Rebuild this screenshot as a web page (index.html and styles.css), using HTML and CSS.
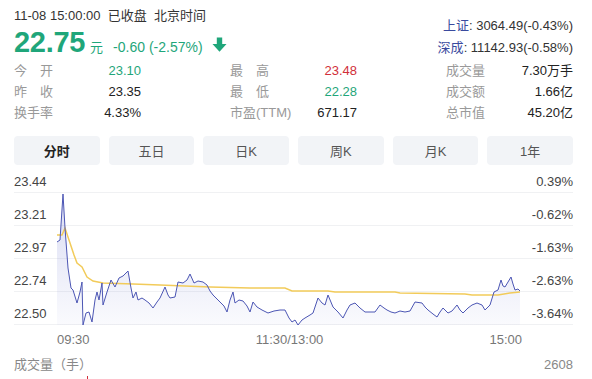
FILE: index.html
```html
<!DOCTYPE html>
<html lang="zh-CN">
<head>
    <meta charset="UTF-8">
    <meta name="viewport" content="width=device-width, initial-scale=1.0">
    <title>分时行情</title>
    <link rel="stylesheet" href="styles.css">
</head>
<body>
    <div class="page">
        <div class="top">
            <div class="quote-left">
                <div class="time">11-08 15:00:00&nbsp;&nbsp;已收盘&nbsp;&nbsp;北京时间</div>
                <div class="quote">
                    <span class="price">22.75</span>
                    <span class="unit">元</span>
                    <span class="change">-0.60 (-2.57%)</span>
                    <svg class="arrow" width="15" height="15" viewBox="0 0 15 15">
                        <path d="M4.8 0.5h5.4v6.6h4.3L7.5 14.7 0.5 7.1h4.3z" fill="#1fa67a"/>
                    </svg>
                </div>
            </div>
            <div class="indices">
                <div><span class="idx-name">上证</span>: 3064.49(-0.43%)</div>
                <div><span class="idx-name">深成</span>: 11142.93(-0.58%)</div>
            </div>
        </div>

        <div class="stats">
            <div class="stat"><span class="label">今开</span><span class="value down">23.10</span></div>
            <div class="stat"><span class="label">最高</span><span class="value up">23.48</span></div>
            <div class="stat"><span class="label">成交量</span><span class="value">7.30万手</span></div>
            <div class="stat"><span class="label">昨收</span><span class="value">23.35</span></div>
            <div class="stat"><span class="label">最低</span><span class="value down">22.28</span></div>
            <div class="stat"><span class="label">成交额</span><span class="value">1.66亿</span></div>
            <div class="stat"><span class="label">换手率</span><span class="value">4.33%</span></div>
            <div class="stat"><span class="label wide">市盈(TTM)</span><span class="value">671.17</span></div>
            <div class="stat"><span class="label">总市值</span><span class="value">45.20亿</span></div>
        </div>

        <div class="tabs">
            <button class="tab active">分时</button>
            <button class="tab">五日</button>
            <button class="tab">日K</button>
            <button class="tab">周K</button>
            <button class="tab">月K</button>
            <button class="tab">1年</button>
        </div>

        <div class="chart">
            <div class="row"><span>23.44</span><span>0.39%</span></div>
            <div class="row"><span>23.21</span><span>-0.62%</span></div>
            <div class="row"><span>22.97</span><span>-1.63%</span></div>
            <div class="row"><span>22.74</span><span>-2.63%</span></div>
            <div class="row"><span>22.50</span><span>-3.64%</span></div>

            <svg class="lines" viewBox="14 165 559 160" preserveAspectRatio="none">
                <defs>
                    <linearGradient id="fill" x1="0" y1="0" x2="0" y2="1">
                        <stop offset="0" stop-color="#5561c8" stop-opacity="0.22"/>
                        <stop offset="1" stop-color="#5561c8" stop-opacity="0.03"/>
                    </linearGradient>
                </defs>
                <path fill="url(#fill)" d="M57,325 L57,242 60,240 63,194 65,228 68,268 71,288 73,290 77,303 80,292 82,282 83,325 86,313 89,312 92,322 95,300 97,292 99,300 102,283 103,305 107,292 109,286 111,280 115,287 119,278 123,276 128,271 131,288 133,298 136,292 138,300 142,298 145,300 149,303 153,308 157,302 160,298 165,287 168,295 170,298 175,297 178,282 183,283 187,280 190,274 194,283 198,281 203,282 207,285 210,291 213,295 217,299 220,302 224,306 227,312 230,300 233,292 235,303 239,300 243,301 247,306 250,312 253,302 257,307 262,310 268,313 274,311 280,310 285,310 289,318 292,322 295,320 298,325 302,320 305,318 310,315 313,313 318,298 322,303 325,305 328,295 333,307 338,312 343,318 347,310 350,305 355,303 360,308 365,312 370,312 375,312 380,305 384,308 387,310 391,312 395,313 400,311 405,312 410,311 415,302 422,303 425,307 428,310 433,314 437,317 440,312 443,308 448,313 452,311 457,305 460,310 463,313 468,308 472,305 477,303 482,305 485,310 490,305 494,292 498,290 501,280 503,286 505,287 508,282 511,277 513,284 515,290 518,289 520,291 L520,325 Z"/>
                <polyline fill="none" stroke="#f2cb5a" stroke-width="1.5" points="57,235 62,235 65,228 70,243 74,255 77,263 82,267 87,277 93,281 103,283 133,284 160,285 210,287 250,288 285,288 292,291 328,291 335,292 395,292 400,293 465,294 472,295 498,295 510,293 520,292"/>
                <polyline fill="none" stroke="#4c56b4" stroke-width="1" points="57,242 60,240 63,194 65,228 68,268 71,288 73,290 77,303 80,292 82,282 83,325 86,313 89,312 92,322 95,300 97,292 99,300 102,283 103,305 107,292 109,286 111,280 115,287 119,278 123,276 128,271 131,288 133,298 136,292 138,300 142,298 145,300 149,303 153,308 157,302 160,298 165,287 168,295 170,298 175,297 178,282 183,283 187,280 190,274 194,283 198,281 203,282 207,285 210,291 213,295 217,299 220,302 224,306 227,312 230,300 233,292 235,303 239,300 243,301 247,306 250,312 253,302 257,307 262,310 268,313 274,311 280,310 285,310 289,318 292,322 295,320 298,325 302,320 305,318 310,315 313,313 318,298 322,303 325,305 328,295 333,307 338,312 343,318 347,310 350,305 355,303 360,308 365,312 370,312 375,312 380,305 384,308 387,310 391,312 395,313 400,311 405,312 410,311 415,302 422,303 425,307 428,310 433,314 437,317 440,312 443,308 448,313 452,311 457,305 460,310 463,313 468,308 472,305 477,303 482,305 485,310 490,305 494,292 498,290 501,280 503,286 505,287 508,282 511,277 513,284 515,290 518,289 520,291"/>
            </svg>
        </div>

        <div class="axis-x">
            <span>09:30</span>
            <span>11:30/13:00</span>
            <span>15:00</span>
        </div>

        <div class="vol-head">
            <span>成交量（手）</span>
            <span>2608</span>
        </div>
        <div class="vol-chart">
            <div class="vol-bar"></div>
        </div>
    </div>
</body>
</html>
```

FILE: styles.css
```css
body {
    margin: 0;
    font-family: "Liberation Sans", "Noto Sans CJK SC", Arial, sans-serif;
    font-size: 13px;
    color: #333;
    background: #fff;
}
.page {
    padding: 7px 19px 0 14px;
}
.top {
    display: flex;
    justify-content: space-between;
    align-items: flex-start;
}
.time {
    line-height: 18px;
    color: #333;
}
.quote {
    display: flex;
    align-items: baseline;
    height: 34px;
    line-height: 34px;
}
.price {
    font-size: 29px;
    font-weight: bold;
    color: #1fa67a;
    letter-spacing: -0.3px;
}
.unit {
    margin-left: 5px;
    color: #1fa67a;
}
.change {
    margin-left: 10px;
    font-size: 14px;
    color: #1fa67a;
}
.arrow {
    margin-left: 9px;
    align-self: center;
    margin-top: 4px;
}
.indices {
    margin-top: 8px;
    text-align: right;
    line-height: 22px;
    color: #333;
}
.idx-name {
    color: #3a4a9e;
}
.stats {
    margin-top: 1px;
    display: grid;
    grid-template-columns: repeat(3, 127px);
    justify-content: space-between;
    line-height: 21px;
}
.stat {
    display: flex;
    justify-content: space-between;
}
.label {
    width: 39px;
    color: #999;
    text-align: justify;
    text-align-last: justify;
}
.label.wide {
    width: auto;
    text-align-last: auto;
}
.value {
    color: #222;
}
.value.up {
    color: #d12f3a;
}
.value.down {
    color: #1fa67a;
}
.tabs {
    margin-top: 13px;
    display: grid;
    grid-template-columns: repeat(6, 1fr);
    gap: 9px;
}
.tab {
    height: 29px;
    border: none;
    border-radius: 4px;
    background-color: #f2f4f7;
    font-family: inherit;
    font-size: 13px;
    color: #555;
    padding: 0;
}
.tab.active {
    font-weight: bold;
    color: #222;
}
.chart {
    position: relative;
}
.row {
    box-sizing: border-box;
    height: 33px;
    display: flex;
    justify-content: space-between;
    align-items: flex-end;
    padding-bottom: 2px;
    border-bottom: 1px solid #f0f1f3;
    line-height: 16px;
    color: #444;
}
.row:first-child {
    height: 28px;
}
.lines {
    position: absolute;
    left: 0;
    top: 0;
    width: 100%;
    height: 160px;
}
.axis-x {
    display: flex;
    justify-content: space-between;
    padding: 0 51px 0 43px;
    line-height: 30px;
    color: #777;
}
.vol-head {
    display: flex;
    justify-content: space-between;
    line-height: 20px;
    color: #888;
}
.vol-chart {
    position: relative;
    height: 4px;
}
.vol-bar {
    position: absolute;
    left: 73px;
    top: 1px;
    width: 1px;
    height: 3px;
    background: #d12f3a;
}
```
